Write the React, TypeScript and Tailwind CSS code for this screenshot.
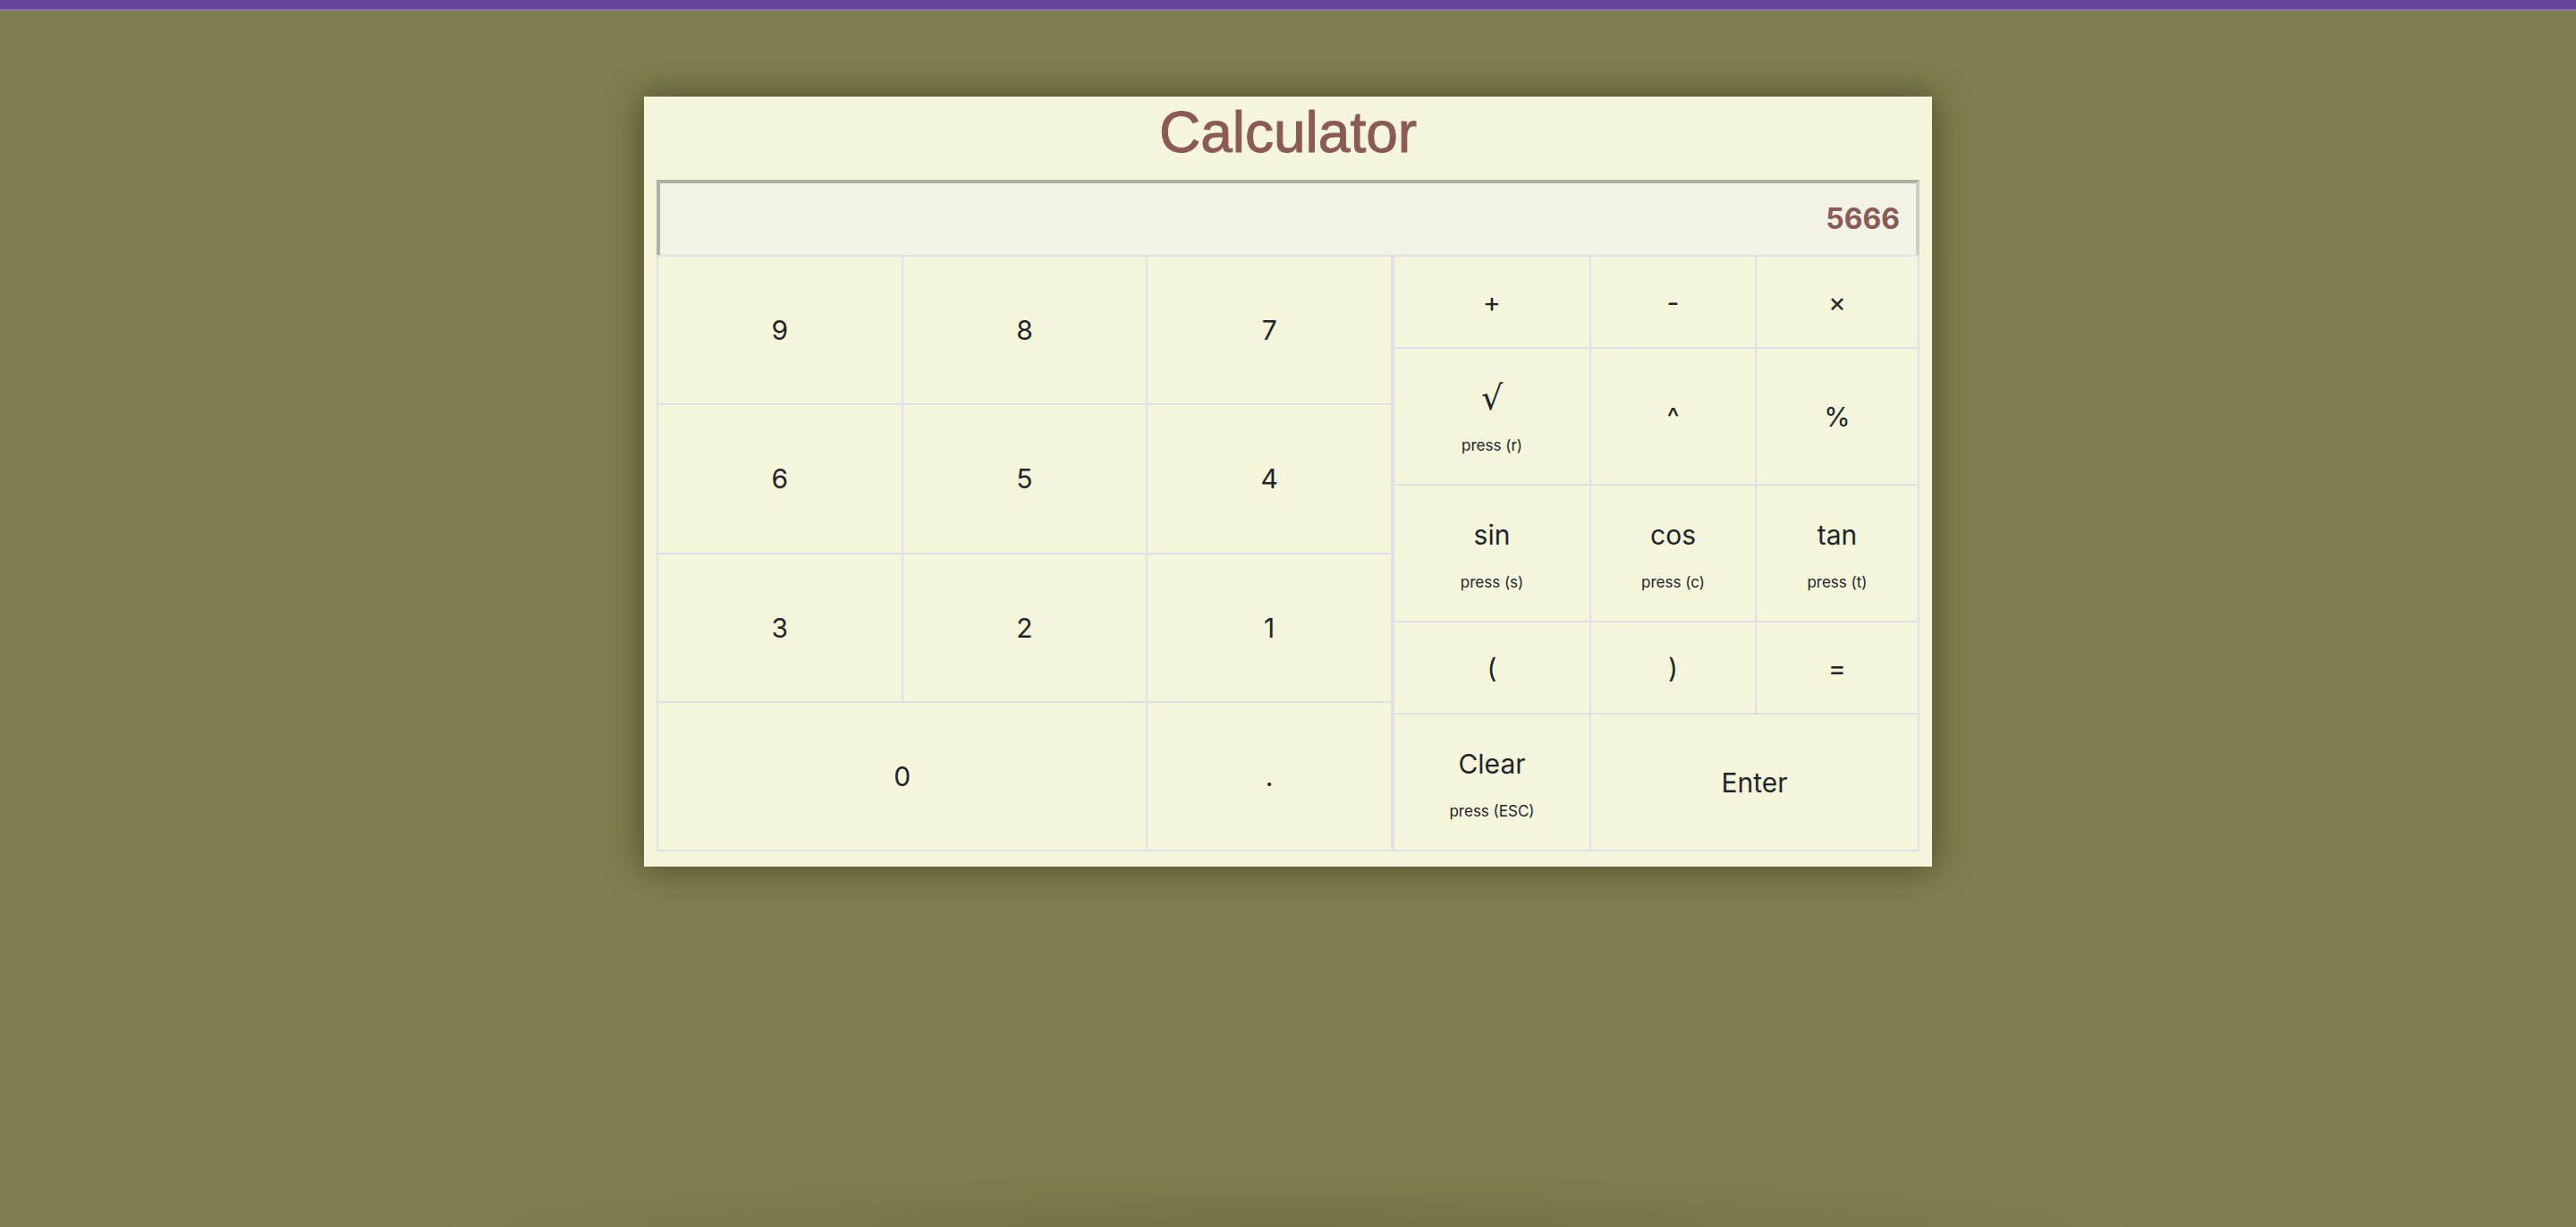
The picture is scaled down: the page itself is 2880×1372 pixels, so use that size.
import React from 'react';

type Key = {
  label: string;
  hint?: string;
  span?: string;
  glyph?: boolean;
};

const digitKeys: Key[] = [
  { label: '9' },
  { label: '8' },
  { label: '7' },
  { label: '6' },
  { label: '5' },
  { label: '4' },
  { label: '3' },
  { label: '2' },
  { label: '1' },
  { label: '0', span: 'col-span-2' },
  { label: '.' },
];

const opKeys: Key[] = [
  { label: '+' },
  { label: '-' },
  { label: '×' },
  { label: '√', hint: 'press (r)', glyph: true },
  { label: '^' },
  { label: '%' },
  { label: 'sin', hint: 'press (s)' },
  { label: 'cos', hint: 'press (c)' },
  { label: 'tan', hint: 'press (t)' },
  { label: '(' },
  { label: ')' },
  { label: '=' },
  { label: 'Clear', hint: 'press (ESC)' },
  { label: 'Enter', span: 'col-span-2' },
];

const KeyCell: React.FC<{ k: Key }> = ({ k }) => (
  <div
    className={`flex flex-col items-center justify-center bg-[#f5f5dc] text-[#212529] ${k.span ?? ''}`}
  >
    {k.glyph ? (
      // the radical sign is taller and thinner than Inter's
      <span className="font-['DejaVu_Sans',sans-serif] text-[38px] leading-[48px]">{k.label}</span>
    ) : (
      <span className="text-[30px] leading-[48px]">{k.label}</span>
    )}
    {k.hint && <span className="mt-[17px] text-[17px] leading-[24px]">{k.hint}</span>}
  </div>
);

export default function App() {
  return (
    <div className="flex min-h-screen flex-col bg-[#7f7e4e] font-['Inter',sans-serif]">
      <div className="h-[10px] bg-[#66449b]" />
      <div className="h-[2px] bg-[#8a6db3]" />

      <div className="flex justify-center pt-[96px]">
        <div className="w-[1440px] bg-[#f5f5dc] px-[14px] pb-[17px] shadow-[0_0_36px_rgba(30,30,10,0.55)]">
          <h1 className="pt-[3px] pb-[16px] text-center font-['Liberation_Sans',Arial,sans-serif] text-[64px] leading-[74px] text-[#8b5a55] [-webkit-text-stroke:1px_#8b5a55]">
            Calculator
          </h1>

          <div className="flex h-[84px] items-center justify-end border-t-4 border-r-4 border-l-4 border-t-[#b1b0a2] border-l-[#b1b0a2] border-r-[#cfcdc1] bg-[#f1f2e3] pr-[18px] text-[32px] font-bold text-[#8b5a55]">
            5666
          </div>

          <div className="flex">
            <div className="grid h-[667px] flex-1 grid-cols-3 grid-rows-4 gap-[2px] border-2 border-[#dee2e6] bg-[#dee2e6]">
              {digitKeys.map(k => (
                <KeyCell key={k.label} k={k} />
              ))}
            </div>
            <div className="grid h-[667px] w-[589px] grid-cols-[218px_183px_180px] grid-rows-[101px_151px_151px_101px_151px] gap-[2px] border-2 border-[#dee2e6] bg-[#dee2e6]">
              {opKeys.map(k => (
                <KeyCell key={k.label} k={k} />
              ))}
            </div>
          </div>
        </div>
      </div>

      <div className="flex-1" />
      <div className="mx-[500px] h-[60px] bg-[radial-gradient(ellipse_at_bottom,rgba(50,50,25,0.16),transparent_75%)]" />
    </div>
  );
}
